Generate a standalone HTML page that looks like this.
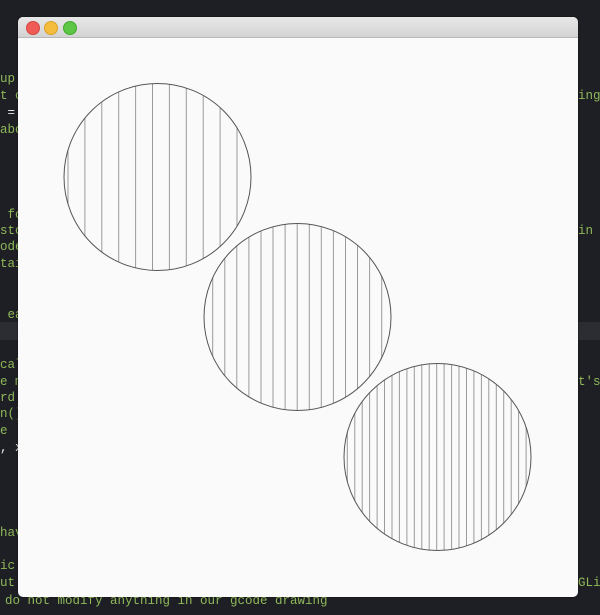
<!DOCTYPE html>
<html><head><meta charset="utf-8"><style>
html,body{margin:0;padding:0;width:600px;height:615px;overflow:hidden;background:#1e1f24;}
.t{position:absolute;font:12.5px/17px "Liberation Mono",monospace;color:#8fb859;white-space:pre;}
.w{color:#e8e8e8}
#hl{position:absolute;left:0;top:322px;width:600px;height:18px;background:#2c2d32;}
#win{position:absolute;left:18px;top:17px;width:560px;height:580px;background:#fafafa;border-radius:5px;overflow:hidden;box-shadow:0 0 2px rgba(0,0,0,.5);}
#bar{height:20px;background:linear-gradient(#e8e8e8,#d3d3d3);border-bottom:1px solid #b8b8b8;position:relative;}
.d{position:absolute;top:4px;width:12px;height:12px;border-radius:50%;}
</style></head><body>
<div id="hl"></div>
<div class="t" style="left:0;top:71px">up</div>
<div class="t" style="left:0;top:88px">t c</div>
<div class="t w" style="left:0;top:105px"> =</div>
<div class="t" style="left:0;top:122px">abo</div>
<div class="t" style="left:0;top:207px"> fo</div>
<div class="t" style="left:0;top:223px">sto</div>
<div class="t" style="left:0;top:239px">ode</div>
<div class="t" style="left:0;top:256px">tai</div>
<div class="t" style="left:0;top:307px"> ea</div>
<div class="t" style="left:0;top:357px">cal</div>
<div class="t" style="left:0;top:374px">e m</div>
<div class="t" style="left:0;top:390px">rd</div>
<div class="t" style="left:0;top:406px">n()</div>
<div class="t" style="left:0;top:423px">e</div>
<div class="t w" style="left:0;top:440px">, x</div>
<div class="t" style="left:0;top:525px">hav</div>
<div class="t" style="left:0;top:558px">ic</div>
<div class="t" style="left:0;top:575px">ut</div>
<div class="t" style="left:5px;top:593px">do not modify anything in our gcode drawing</div>
<div class="t" style="left:578px;top:88px">ing</div>
<div class="t" style="left:578px;top:223px">in t</div>
<div class="t" style="left:578px;top:374px">t's</div>
<div class="t" style="left:578px;top:575px">GLi</div>
<div id="win"><div id="bar">
<div class="d" style="left:8px;background:#ee5c55;border:0.5px solid #d2463f"></div>
<div class="d" style="left:26px;background:#f5bd3d;border:0.5px solid #d9a22a"></div>
<div class="d" style="left:45px;background:#5dc644;border:0.5px solid #45a830"></div>
</div>
<svg id="s" width="560" height="560" style="position:absolute;left:0;top:20px"></svg>
</div>
<script>
var s=document.getElementById('s'),h='';
var C=[[157.5,177,68,16.9],[297.5,317,212.7,12.07],[437.5,457,347.3,7.45]];
C.forEach(function(c){var cx=c[0]-18,cy=c[1]-37,r=93.5;
for(var x=c[2]-18;x<cx+r;x+=c[3]){var dx=x-cx;if(Math.abs(dx)>=r)continue;var hh=Math.sqrt(r*r-dx*dx);
h+='<line x1="'+x.toFixed(1)+'" x2="'+x.toFixed(1)+'" y1="'+(cy-hh).toFixed(1)+'" y2="'+(cy+hh).toFixed(1)+'" stroke="#9a9a9a" stroke-width="1"/>';}
h+='<circle cx="'+cx+'" cy="'+cy+'" r="'+r+'" fill="none" stroke="#555" stroke-width="1"/>';});
s.innerHTML=h;
</script>
</body></html>
